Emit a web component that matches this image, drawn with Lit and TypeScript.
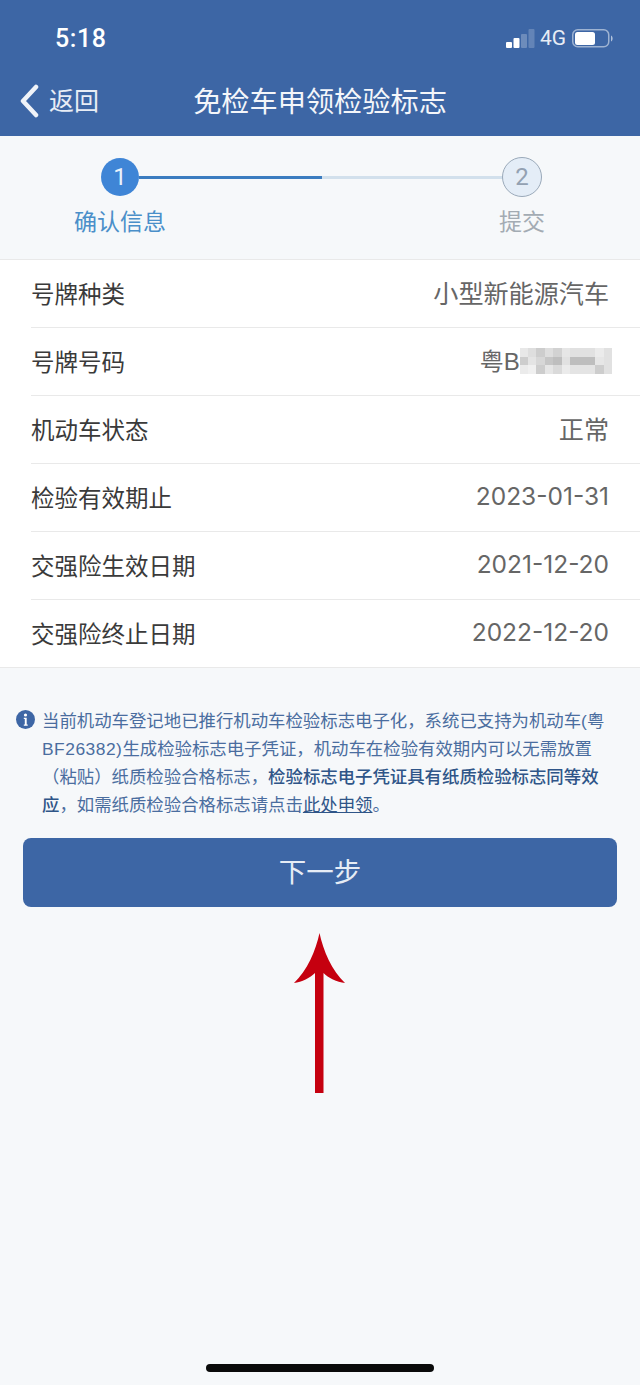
import { LitElement, html, css, svg } from 'lit';
import { customElement } from 'lit/decorators.js';

const rows: [string, string][] = [
  ['号牌种类', '小型新能源汽车'],
  ['号牌号码', ''],
  ['机动车状态', '正常'],
  ['检验有效期止', '2023-01-31'],
  ['交强险生效日期', '2021-12-20'],
  ['交强险终止日期', '2022-12-20'],
];

// greys for the pixelated part of the plate number
const plateMask = [
  [232, 222, 205, 222, 210, 230, 225, 225, 225, 235, 225],
  [205, 228, 215, 198, 190, 225, 190, 190, 190, 230, 225],
  [235, 240, 205, 230, 218, 235, 228, 228, 228, 205, 225],
];

@customElement('app-root')
export class AppRoot extends LitElement {
  static override styles = css`
    :host {
      display: block;
      width: 640px;
      height: 1385px;
      position: relative;
      overflow: hidden;
      background: #f6f8fa;
      font-family: 'Liberation Sans', 'Noto Sans CJK SC', sans-serif;
    }

    .top {
      height: 136px;
      background: #3d66a5;
      color: #fff;
      display: flex;
      flex-direction: column;
    }

    .status {
      height: 76px;
      display: flex;
      align-items: center;
      padding: 0 27px 0 55px;
      font-family: Roboto, sans-serif;
    }

    .time {
      font-size: 25px;
      font-weight: 500;
      letter-spacing: 0.6px;
      flex: 1;
    }

    .net {
      font-size: 21px;
      margin: 0 6px 0 5px;
      color: #e8edf5;
    }

    .nav {
      height: 50px;
      display: grid;
      grid-template-columns: 1fr auto 1fr;
      align-items: center;
    }

    .back {
      display: flex;
      align-items: center;
      padding-left: 19px;
      gap: 10px;
      font-size: 25px;
      color: #e8edf5;
    }

    .back span {
      padding-bottom: 4px;
    }

    .title {
      font-size: 28.2px;
      padding-bottom: 3px;
      color: #f4f6fa;
    }

    .steps {
      height: 123px;
      position: relative;
      display: flex;
      justify-content: space-between;
      padding: 22px 95px 0 74px;
      box-sizing: border-box;
    }

    .step {
      display: flex;
      flex-direction: column;
      align-items: center;
      gap: 9px;
      font-size: 23px;
      line-height: 34px;
      position: relative;
      z-index: 1;
    }

    .step.on { color: #4a8fc9; }
    .step.off { color: #a3abb3; }

    .dot {
      width: 38px;
      height: 38px;
      border-radius: 50%;
      box-sizing: border-box;
      display: flex;
      align-items: center;
      justify-content: center;
      font-family: Roboto, sans-serif;
      font-size: 24px;
      line-height: 1;
    }

    .on .dot {
      background: #3f85d6;
      color: #eaf2fb;
    }

    .off .dot {
      width: 40px;
      height: 40px;
      margin-top: -1px;
      margin-bottom: -1px;
      background: #e4edf7;
      border: 1.5px solid #9aa9b9;
      color: #93a1b2;
    }

    .track {
      position: absolute;
      left: 139px;
      top: 40px;
      width: 366px;
      height: 3px;
      background: linear-gradient(to right, #3b7cc0 50%, #d2e0ec 50%);
    }

    .list {
      background: #fff;
      border-top: 1px solid #e9e9e9;
      border-bottom: 1px solid #e9e9e9;
    }

    .row {
      height: 68px;
      box-sizing: border-box;
      margin-left: 31px;
      border-bottom: 1px solid #e9e9e9;
      display: flex;
      align-items: center;
      justify-content: space-between;
      padding: 0 31px 1px 0;
      font-size: 23.5px;
      color: #3a3a3a;
    }

    .row:last-child {
      height: 67px;
      border-bottom: none;
    }

    .value {
      font-size: 25.1px;
      color: #666;
      display: flex;
      align-items: center;
      margin-top: -3px;
    }

    .date {
      font-family: Inter, sans-serif;
      font-size: 24.500px;
      margin-top: -2px;
    }

    .plate {
      font-size: 24px;
      margin-right: -3px;
    }

    .mask {
      display: grid;
      grid-template-columns: repeat(11, 8.4px);
      grid-auto-rows: 8.7px;
      margin-top: 3px;
    }

    .notice {
      display: flex;
      gap: 7px;
      padding: 39px 20px 0 16px;
      font-size: 17.4px;
      line-height: 28px;
      color: #4a6d9f;
      white-space: nowrap;
    }

    .notice svg {
      flex: none;
      margin-top: 3px;
    }

    .notice .latin {
      letter-spacing: 0.5px;
    }

    .notice b {
      color: #2f5588;
      font-weight: 500;
    }

    .notice u {
      color: #2f5588;
    }

    .next {
      display: flex;
      align-items: center;
      justify-content: center;
      height: 69px;
      margin: 19px 23px 0;
      padding-bottom: 5px;
      box-sizing: border-box;
      border-radius: 8px;
      background: #3d66a5;
      color: #e6ecf5;
      font-size: 27.5px;
    }

    .arrow {
      position: absolute;
      left: 290px;
      top: 930px;
    }

    .home {
      position: absolute;
      left: 206px;
      top: 1364px;
      width: 228px;
      height: 8px;
      border-radius: 4px;
      background: #0a0a0a;
    }
  `;

  private signal() {
    const bars = [
      [0, 6, 1],
      [7.500, 10, 1],
      [15, 14, 0.25],
      [22.500, 19, 0.2],
    ];
    return html`<svg width="29" height="19" viewBox="0 0 29 19">
      ${bars.map(
        ([x, h, o]) =>
          svg`<rect x=${x} y=${19 - h} width="6" height=${h} rx="1" fill="#fff" opacity=${o}></rect>`
      )}
    </svg>`;
  }

  private battery() {
    return html`<svg width="41" height="19" viewBox="0 0 41 19">
      <rect x="0.750" y="0.750" width="36" height="17" rx="5" fill="none" stroke="#fff" stroke-opacity="0.5" stroke-width="1.500"></rect>
      <rect x="3" y="3" width="20" height="13" rx="2.500" fill="#fff"></rect>
      <path d="M39 6.500c1.200.5 1.600 1.600 1.600 3s-.4 2.500-1.600 3z" fill="#fff" fill-opacity="0.6"></path>
    </svg>`;
  }

  private plateValue() {
    return html`<span class="value plate">
      粤B
      <span class="mask">
        ${plateMask.flat().map((g) => html`<i style="background: rgb(${g},${g},${g})"></i>`)}
      </span>
    </span>`;
  }

  private rowValue(value: string) {
    if (!value) return this.plateValue();
    const isDate = /^\d/.test(value);
    return html`<span class="value ${isDate ? 'date' : ''}">${value}</span>`;
  }

  override render() {
    return html`
      <div class="top">
        <div class="status">
          <span class="time">5:18</span>
          ${this.signal()}
          <span class="net">4G</span>
          ${this.battery()}
        </div>
        <div class="nav">
          <div class="back">
            <svg width="20" height="34" viewBox="0 0 20 34">
              <path d="M17 3 4 17l13 14" fill="none" stroke="#f0f3f8" stroke-width="4.500" stroke-linecap="round" stroke-linejoin="round"></path>
            </svg>
            <span>返回</span>
          </div>
          <div class="title">免检车申领检验标志</div>
          <div></div>
        </div>
      </div>

      <div class="steps">
        <div class="track"></div>
        <div class="step on"><span class="dot">1</span>确认信息</div>
        <div class="step off"><span class="dot">2</span>提交</div>
      </div>

      <div class="list">
        ${rows.map(
          ([label, value]) => html`<div class="row">
            <span>${label}</span>
            ${this.rowValue(value)}
          </div>`
        )}
      </div>

      <div class="notice">
        <svg width="19" height="19" viewBox="0 0 19 19">
          <circle cx="9.500" cy="9.500" r="9.500" fill="#3d66a5"></circle>
          <circle cx="9.500" cy="5" r="1.600" fill="#fff"></circle>
          <path d="M7.800 7.800h2.900v6.700h1v1.200H7.800v-1.200h1V9h-1z" fill="#fff"></path>
        </svg>
        <div>
          当前机动车登记地已推行机动车检验标志电子化，系统已支持为机动车(粤<br />
          <span class="latin">BF26382)</span>生成检验标志电子凭证，机动车在检验有效期内可以无需放置<br />
          （粘贴）纸质检验合格标志，<b>检验标志电子凭证具有纸质检验标志同等效</b><br />
          <b>应</b>，如需纸质检验合格标志请点击<u>此处申领</u>。
        </div>
      </div>

      <div class="next">下一步</div>

      <svg class="arrow" width="60" height="166" viewBox="0 0 60 166">
        <path
          d="M29.500 3C33 20 42 41 55 53 47 52 38 48 33.500 43V163H25V43C20 48 12 52 4 53 17 41 26 20 29.500 3z"
          fill="#c5000f"
        ></path>
      </svg>

      <div class="home"></div>
    `;
  }
}

declare global {
  interface HTMLElementTagNameMap {
    'app-root': AppRoot;
  }
}
